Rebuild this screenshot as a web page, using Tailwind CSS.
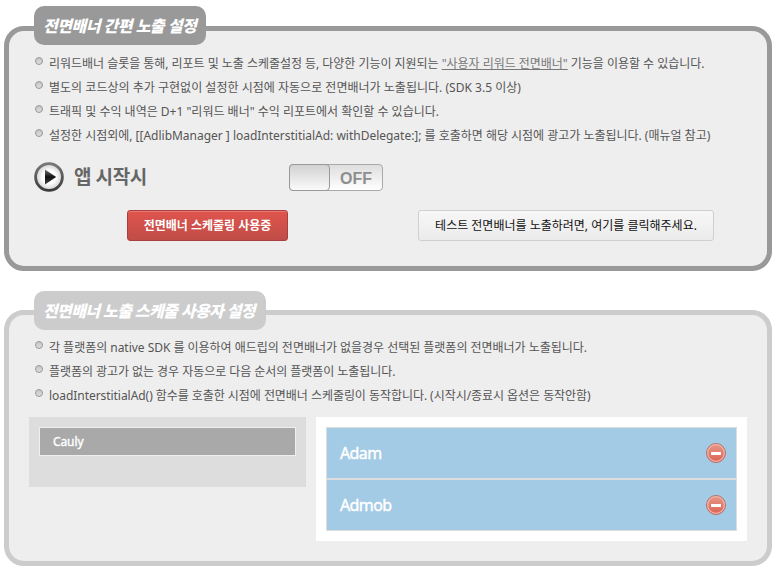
<!DOCTYPE html>
<html lang="ko">
<head>
<meta charset="utf-8">
<title>전면배너 설정</title>
<script src="https://cdn.jsdelivr.net/npm/@tailwindcss/browser@4"></script>
</head>
<body class="h-[571px] overflow-hidden bg-white pt-[26px] pl-1 font-['Noto_Sans','Noto_Sans_CJK_KR',sans-serif] text-[12px] text-[#555]">
<svg class="absolute size-0">
  <defs>
    <linearGradient id="dot" x1="0" y1="0" x2="0" y2="1"><stop offset="0" stop-color="#c4c4c4"/><stop offset="1" stop-color="#dedede"/></linearGradient>
    <linearGradient id="ring" x1="0" y1="0" x2="0" y2="1"><stop offset="0" stop-color="#777"/><stop offset="1" stop-color="#3c3c3c"/></linearGradient>
    <radialGradient id="face"><stop offset="0.5" stop-color="#fff"/><stop offset="1" stop-color="#ccc"/></radialGradient>
    <linearGradient id="tri" x1="0" y1="0" x2="0" y2="1"><stop offset="0" stop-color="#777"/><stop offset="0.5" stop-color="#111"/><stop offset="1" stop-color="#444"/></linearGradient>
    <linearGradient id="red" x1="0" y1="0" x2="0" y2="1"><stop offset="0" stop-color="#e59a8a"/><stop offset="1" stop-color="#dc6155"/></linearGradient>
    <symbol id="bullet" viewBox="0 0 8 8"><circle cx="4" cy="4" r="3.5" fill="url(#dot)" stroke="#999" stroke-width="1"/></symbol>
    <symbol id="minus" viewBox="0 0 20 20"><circle cx="10" cy="10" r="9.5" fill="url(#red)" stroke="#b5706a"/><circle cx="10" cy="10" r="8.3" fill="none" stroke="#efb5a9" stroke-width="1.2"/><rect x="5" y="9" width="10" height="3" fill="#fff"/></symbol>
  </defs>
</svg>

<section class="h-[245px] w-[768px] rounded-[20px] border-[5px] border-[#999] bg-[#eee] px-5">
  <h2 class="relative -mt-[25px] ml-[5px] flex h-[39px] w-[172px] items-center whitespace-nowrap rounded-[10px] bg-[#999] pl-[9px] text-[16px] font-extrabold italic tracking-[-0.5px] text-white"><span>전면배너 간편 노출 설정</span></h2>
  <ul class="mt-[6px] pl-[6px] whitespace-nowrap">
    <li class="flex h-6 items-center"><svg class="mr-[6px] -mt-1 size-2"><use href="#bullet"/></svg><span class="pt-0.5 tracking-[-0.03px]">리워드배너 슬롯을 통해, 리포트 및 노출 스케줄설정 등, 다양한 기능이 지원되는 <a class="text-[#777] underline">"사용자 리워드 전면배너"</a> 기능을 이용할 수 있습니다.</span></li>
    <li class="flex h-6 items-center"><svg class="mr-[6px] -mt-1 size-2"><use href="#bullet"/></svg><span class="pt-0.5 tracking-[0.02px]">별도의 코드상의 추가 구현없이 설정한 시점에 자동으로 전면배너가 노출됩니다. (SDK 3.5 이상)</span></li>
    <li class="flex h-6 items-center"><svg class="mr-[6px] -mt-1 size-2"><use href="#bullet"/></svg><span class="pt-0.5">트래픽 및 수익 내역은 D+1 "리워드 배너" 수익 리포트에서 확인할 수 있습니다.</span></li>
    <li class="flex h-6 items-center"><svg class="mr-[6px] -mt-1 size-2"><use href="#bullet"/></svg><span class="pt-0.5 tracking-[-0.015px]">설정한 시점외에, [[AdlibManager ] loadInterstitialAd: withDelegate:]; 를 호출하면 해당 시점에 광고가 노출됩니다. (매뉴얼 참고)</span></li>
  </ul>
  <div class="mt-[15px] flex h-[30px] items-center pl-[5px]">
    <svg class="size-[30px]" viewBox="0 0 30 30"><circle cx="15" cy="15" r="13.4" fill="url(#face)" stroke="url(#ring)" stroke-width="2.8"/><path d="M11 7.5 22.2 15 11 22.5Z" fill="url(#tri)"/></svg>
    <span class="ml-[10px] w-[215px] whitespace-nowrap text-[19px] font-bold leading-[30px] tracking-[-0.4px] text-[#666]"><span>앱 시작시</span></span>
    <div class="flex h-[27px] w-[94px] rounded-[4px] border border-[#a9a9a9] bg-linear-to-b from-[#dedede] to-white">
      <div class="-mt-px -ml-px h-[27px] w-[41px] rounded-[4px] border border-[#999] bg-linear-to-b from-[#d2d2d2] to-[#fafafa]"></div>
      <span class="ml-[10px] font-['Liberation_Sans',sans-serif] text-[16px] font-bold leading-[27px] text-[#8e8e8e]">OFF</span>
    </div>
  </div>
  <div class="mt-[18px] flex pl-[98px] whitespace-nowrap">
    <button class="h-[31px] w-[161px] rounded-[3px] border border-[#a9403d] bg-linear-to-b from-[#e0554d] to-[#c04c48] font-bold text-white shadow-[inset_0_1px_0_#e87972]"><span>전면배너 스케줄링 사용중</span></button>
    <button class="ml-[130px] h-[31px] w-[296px] rounded-[3px] border border-[#d0d0d0] bg-linear-to-b from-[#f7f7f7] to-[#ebebeb] text-[#111]"><span>테스트 전면배너를 노출하려면, 여기를 클릭해주세요.</span></button>
  </div>
</section>

<section class="mt-[39px] h-[256px] w-[768px] rounded-[20px] border-[5px] border-[#ccc] bg-[#eee] px-5">
  <h2 class="relative -mt-6 ml-[5px] flex h-[39px] w-[232px] items-center whitespace-nowrap rounded-[10px] bg-[#ccc] pl-[9px] text-[16px] font-extrabold italic tracking-[-0.6px] text-white"><span>전면배너 노출 스케줄 사용자 설정</span></h2>
  <ul class="mt-[5px] pl-[6px] whitespace-nowrap">
    <li class="flex h-6 items-center"><svg class="mr-[6px] -mt-1 size-2"><use href="#bullet"/></svg><span class="pt-0.5 tracking-[-0.025px]">각 플랫폼의 native SDK 를 이용하여 애드립의 전면배너가 없을경우 선택된 플랫폼의 전면배너가 노출됩니다.</span></li>
    <li class="flex h-6 items-center"><svg class="mr-[6px] -mt-1 size-2"><use href="#bullet"/></svg><span class="pt-0.5 tracking-[-0.05px]">플랫폼의 광고가 없는 경우 자동으로 다음 순서의 플랫폼이 노출됩니다.</span></li>
    <li class="flex h-6 items-center"><svg class="mr-[6px] -mt-1 size-2"><use href="#bullet"/></svg><span class="pt-0.5 tracking-[-0.05px]">loadInterstitialAd() 함수를 호출한 시점에 전면배너 스케줄링이 동작합니다. (시작시/종료시 옵션은 동작안함)</span></li>
  </ul>
  <div class="mt-[10px] flex items-start gap-[10px]">
    <div class="h-[70px] w-[277px] bg-[#ddd] p-[10px]">
      <div class="flex h-[29px] items-center border border-[#eee] bg-[#a9a9a9] pl-[13px] tracking-[-0.1px] text-white [-webkit-text-stroke:0.4px_white]"><span>Cauly</span></div>
    </div>
    <div class="h-[124px] w-[431px] bg-white p-[10px] text-[16px] tracking-[-0.6px] text-white [-webkit-text-stroke:0.4px_white]">
      <div class="flex h-[52px] items-center justify-between border border-[#ddd] bg-[#a4cbe5] pr-[10px] pl-[13px]"><span>Adam</span><svg class="size-5"><use href="#minus"/></svg></div>
      <div class="flex h-[52px] items-center justify-between border border-[#ddd] bg-[#a4cbe5] pr-[10px] pl-[13px]"><span>Admob</span><svg class="size-5"><use href="#minus"/></svg></div>
    </div>
  </div>
</section>
</body>
</html>
